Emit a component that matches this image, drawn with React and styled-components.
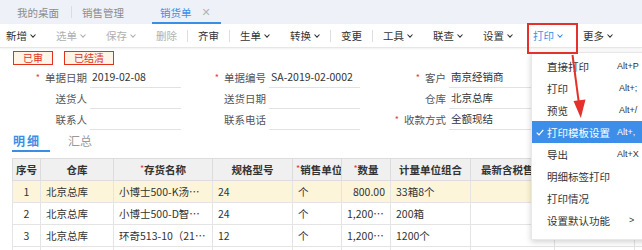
import React from 'react';
import styled, { createGlobalStyle } from 'styled-components';

const Global = createGlobalStyle`
  html, body { margin: 0; padding: 0; background: #fff; }
  body {
    font-family: "Noto Sans CJK SC", "Noto Sans", sans-serif;
    font-size: 10.5px;
    color: #333;
    overflow: hidden;
  }
  * { box-sizing: border-box; }
`;

const Page = styled.div`
  position: relative;
  width: 642px;
  height: 250px;
  overflow: hidden;
  background: #fff;
`;

/* ---------- top nav tabs ---------- */
const TabBar = styled.div`
  display: flex;
  align-items: stretch;
  height: 24px;
  background: #eef1f7;
`;
const NavTab = styled.div`
  display: flex;
  align-items: center;
  gap: 10px;
  padding: ${p => p.$pad};
  margin-left: ${p => p.$ml || 0}px;
  color: ${p => (p.$active ? '#3a8ee6' : '#8c8c8c')};
  border-bottom: 2px solid ${p => (p.$active ? '#3a8ee6' : 'transparent')};
  padding-top: 2px;
`;
const NavSep = styled.div`
  width: 1px;
  height: 12px;
  align-self: center;
  background: #d9dde5;
`;
const Close = styled.span`
  color: #b5b5b5;
  font-size: 11px;
  font-family: "DejaVu Sans", sans-serif;
`;

/* ---------- toolbar ---------- */
const Toolbar = styled.div`
  display: flex;
  align-items: center;
  height: 24px;
  padding-left: 6px;
  background: #fff;
  border-bottom: 1px solid #e6e6e6;
  box-shadow: 0 1px 2px rgba(0, 0, 0, 0.06);
`;
const ToolItem = styled.div`
  display: flex;
  align-items: center;
  gap: 3px;
  padding: 0 10px;
  color: ${p => (p.$disabled ? '#b0b0b0' : p.$active ? '#3a8ee6' : '#333')};
  &:first-child { padding-left: 0; }
`;
const ToolSep = styled.div`
  width: 1px;
  height: 12px;
  background: #dedede;
`;

const Chevron = ({ color = 'currentColor' }) => (
  <svg width="6" height="4" viewBox="0 0 6 4">
    <polyline points="0.5,0.5 3,3.2 5.5,0.5" fill="none" stroke={color} strokeWidth="1.1" />
  </svg>
);

/* ---------- status badges ---------- */
const Badges = styled.div`
  display: flex;
  gap: 11px;
  padding: 3px 0 0 13px;
`;
const Badge = styled.div`
  height: 14px;
  padding: 0 9px;
  border: 1px solid #e0321e;
  background: #fff4e8;
  color: #e0321e;
  font-size: 10px;
  line-height: 12px;
`;

/* ---------- form ---------- */
const Form = styled.div`
  display: grid;
  grid-template-columns: 90px 91px 88px 91px 89px 92px;
  grid-auto-rows: 21px;
  margin-top: 2px;
`;
const Label = styled.div`
  display: flex;
  align-items: center;
  justify-content: flex-end;
  padding-right: 3px;
  height: 20px;
  color: #555;
  white-space: nowrap;
`;
const Star = styled.span`
  color: #e4393c;
  font-size: 9px;
  margin-right: 5px;
`;
const Field = styled.div`
  display: flex;
  align-items: center;
  height: 21px;
  padding: 0 2px 1px;
  border-bottom: 1px solid ${p => (p.$line ? '#e2e2e2' : 'transparent')};
  color: #333;
  white-space: nowrap;
`;

/* ---------- detail tabs ---------- */
const DetailTabs = styled.div`
  display: flex;
  gap: 17px;
  padding-left: 12px;
  margin-top: 1px;
  height: 27px;
`;
const DetailTab = styled.div`
  width: ${p => p.$w}px;
  height: 21px;
  display: flex;
  align-items: center;
  padding-left: 1px;
  font-size: 12px;
  letter-spacing: ${p => (p.$active ? '2px' : '0')};
  font-weight: ${p => (p.$active ? 700 : 400)};
  color: ${p => (p.$active ? '#3a8ee6' : '#999')};
  border-bottom: 2px solid ${p => (p.$active ? '#3a8ee6' : 'transparent')};
`;

/* ---------- table ---------- */
const Table = styled.table`
  margin-left: 12px;
  border-collapse: collapse;
  table-layout: fixed;
  width: 702px;
`;
const Th = styled.th`
  height: 22px;
  padding: 0 3px;
  background: #f0f0f0;
  border: 1px solid #dcdcdc;
  font-weight: 700;
  color: #333;
  text-align: center;
  white-space: nowrap;
  overflow: hidden;
  font-size: 10.5px;
`;
const HeadStar = styled.span`
  color: #e4393c;
  font-weight: 400;
  font-size: 9px;
  vertical-align: 2px;
`;
const Tr = styled.tr`
  background: ${p => (p.$hl ? '#fdf5d9' : '#fff')};
`;
const Td = styled.td`
  height: 22px;
  padding: 0 5px;
  border: 1px solid #e4e4e4;
  text-align: ${p => p.$align || 'left'};
  white-space: nowrap;
  overflow: hidden;
  text-overflow: ellipsis;
  color: #333;
`;

/* ---------- dropdown + annotations ---------- */
const Menu = styled.div`
  position: absolute;
  left: 531px;
  top: 52px;
  width: 150px;
  padding: 2px 0 8px;
  background: #fff;
  box-shadow: 0 2px 6px rgba(0, 0, 0, 0.18);
  border: 1px solid #e8e8e8;
`;
const MenuItem = styled.div`
  display: flex;
  align-items: center;
  height: 22px;
  padding-left: 4px;
  background: ${p => (p.$sel ? '#3c8ee8' : 'transparent')};
  color: ${p => (p.$sel ? '#fff' : '#333')};
`;
const CheckSlot = styled.span`
  width: 11px;
  display: flex;
  align-items: center;
`;
const MenuLabel = styled.span`
  width: 70px;
  white-space: nowrap;
`;
const Shortcut = styled.span`
  font-family: "Liberation Sans", Arial, sans-serif;
  font-size: 9px;
  padding-left: ${p => p.$pl || 0}px;
`;
const RedBox = styled.div`
  position: absolute;
  left: 527px;
  top: 23px;
  width: 51px;
  height: 31px;
  border: 2px solid #e4312b;
  pointer-events: none;
`;
const Overlay = styled.svg`
  position: absolute;
  left: 0;
  top: 0;
  pointer-events: none;
`;

const tools = [
  { t: '新增', c: true },
  { t: '选单', c: true, d: true },
  { t: '保存', c: true, d: true },
  { t: '删除', d: true },
  'sep',
  { t: '齐审' },
  'sep',
  { t: '生单', c: true },
  { t: '转换', c: true },
  'sep',
  { t: '变更' },
  'sep',
  { t: '工具', c: true },
  { t: '联查', c: true },
  { t: '设置', c: true },
  { t: '打印', c: true, a: true },
  { t: '更多', c: true },
];

const formRows = [
  [
    { l: '单据日期', s: true, v: '2019-02-08', line: true },
    { l: '单据编号', s: true, v: 'SA-2019-02-0002', line: true },
    { l: '客户', s: true, v: '南京经销商', line: true },
  ],
  [
    { l: '送货人', v: '', line: true },
    { l: '送货日期', v: '', line: true },
    { l: '仓库', v: '北京总库', line: true },
  ],
  [
    { l: '联系人', v: '', line: true },
    { l: '联系电话', v: '', line: true },
    { l: '收款方式', s: true, v: '全额现结', line: true },
  ],
];

const cols = [
  { h: '序号', w: 28 },
  { h: '仓库', w: 73 },
  { h: '存货名称', w: 99, s: true },
  { h: '规格型号', w: 80 },
  { h: '销售单位', w: 49, s: true },
  { h: '数量', w: 49, s: true },
  { h: '计量单位组合', w: 80 },
  { h: '最新含税售价', w: 84 },
  { h: '含税单价', w: 80 },
  { h: '金额', w: 80 },
];

const rows = [
  ['1', '北京总库', '小博士500-K汤锅（24cm）', '24', '个', '800.00', '33箱8个', '', '', ''],
  ['2', '北京总库', '小博士500-D智能锅', '24', '个', '1,200.00', '200箱', '', '', ''],
  ['3', '北京总库', '环奇513-10（21cm）', '12', '个', '1,200.00', '1200个', '', '', ''],
  ['', '', '', '', '', '', '', '', '', ''],
];

const menu = [
  { t: '直接打印', k: 'Alt+P' },
  { t: '打印', k: 'Alt+;', pl: 2 },
  { t: '预览', k: 'Alt+/', pl: 2 },
  { t: '打印模板设置', k: 'Alt+,', sel: true },
  { t: '导出', k: 'Alt+X' },
  { t: '明细标签打印' },
  { t: '打印情况' },
  { t: '设置默认功能', k: '>', pl: 12 },
];

export default function App() {
  return (
    <Page>
      <Global />
      <TabBar>
        <NavTab $pad="2px 12px 0 17px">我的桌面</NavTab>
        <NavSep />
        <NavTab $pad="2px 10px 0 10px">销售管理</NavTab>
        <NavTab $pad="2px 10px 0 8px" $ml={18} $active>
          销货单<Close>✕</Close>
        </NavTab>
      </TabBar>

      <Toolbar>
        {tools.map((it, i) =>
          it === 'sep' ? (
            <ToolSep key={i} />
          ) : (
            <ToolItem key={i} $disabled={it.d} $active={it.a}>
              {it.t}
              {it.c && <Chevron />}
            </ToolItem>
          )
        )}
      </Toolbar>

      <Badges>
        <Badge>已审</Badge>
        <Badge>已结清</Badge>
      </Badges>

      <Form>
        {formRows.map((r, ri) =>
          r.map((f, fi) => (
            <React.Fragment key={`${ri}-${fi}`}>
              <Label>
                {f.s && <Star>*</Star>}
                {f.l}
              </Label>
              <Field $line={f.line}>{f.v}</Field>
            </React.Fragment>
          ))
        )}
      </Form>

      <DetailTabs>
        <DetailTab $w={38} $active>明细</DetailTab>
        <DetailTab $w={30}>汇总</DetailTab>
      </DetailTabs>

      <Table>
        <colgroup>
          {cols.map((c, i) => (
            <col key={i} style={{ width: c.w }} />
          ))}
        </colgroup>
        <thead>
          <tr>
            {cols.map((c, i) => (
              <Th key={i}>
                {c.s && <HeadStar>*</HeadStar>}
                {c.h}
              </Th>
            ))}
          </tr>
        </thead>
        <tbody>
          {rows.map((r, ri) => (
            <Tr key={ri} $hl={ri === 0}>
              {r.map((v, ci) => (
                <Td key={ci} $align={ci === 0 ? 'center' : ci === 5 ? 'right' : 'left'}>
                  {v}
                </Td>
              ))}
            </Tr>
          ))}
        </tbody>
      </Table>

      <Menu>
        {menu.map((m, i) => (
          <MenuItem key={i} $sel={m.sel}>
            <CheckSlot>
              {m.sel && (
                <svg width="8" height="7" viewBox="0 0 8 7">
                  <polyline points="0.7,3.6 3,5.8 7.3,0.8" fill="none" stroke="#fff" strokeWidth="1.2" />
                </svg>
              )}
            </CheckSlot>
            <MenuLabel>{m.t}</MenuLabel>
            {m.k && <Shortcut $pl={m.pl}>{m.k}</Shortcut>}
          </MenuItem>
        ))}
      </Menu>

      <RedBox />
      <Overlay width="642" height="250" viewBox="0 0 642 250">
        <line x1="572.5" y1="55" x2="579" y2="104" stroke="#e4312b" strokeWidth="2" />
        <polygon points="573.5,101 585.5,99.5 580.8,118" fill="#e4312b" />
      </Overlay>
    </Page>
  );
}
